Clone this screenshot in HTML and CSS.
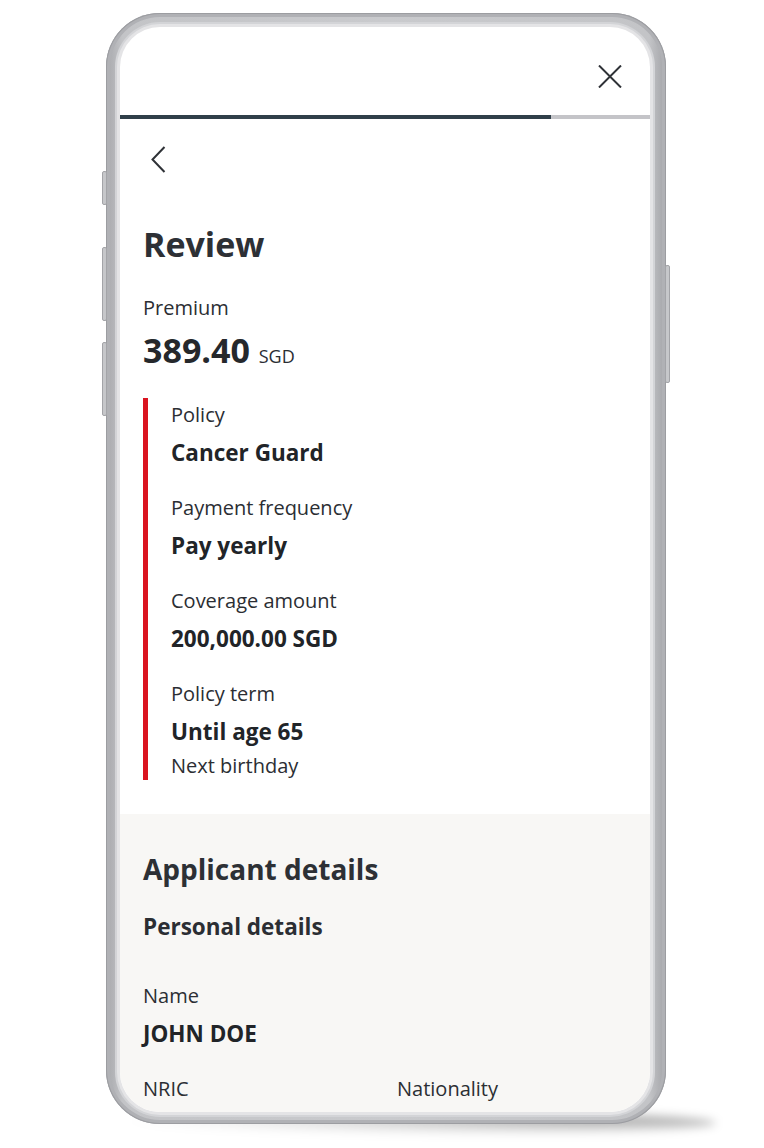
FILE: index.html
```html
<!DOCTYPE html>
<html lang="en">
<head>
<meta charset="utf-8">
<title>Review</title>
<link rel="stylesheet" href="styles.css">
</head>
<body>
<div class="stage">
  <div class="phone">
    <span class="btn btn-l1"></span>
    <span class="btn btn-l2"></span>
    <span class="btn btn-l3"></span>
    <span class="btn btn-r1"></span>
    <div class="screen">
      <div class="topbar">
        <svg class="close" width="24" height="23" viewBox="0 0 24 23" aria-label="Close">
          <path d="M1 0.5 L23 22.5 M23 0.5 L1 22.5" stroke="#2f3237" stroke-width="2" fill="none"/>
        </svg>
      </div>
      <div class="progress"><div class="progress-fill" style="width:81.3%"></div></div>
      <div class="nav">
        <svg width="15" height="27" viewBox="0 0 15 27" aria-label="Back">
          <path d="M13.5 1 L1.5 13.5 L13.5 26" stroke="#2f3237" stroke-width="2" fill="none"/>
        </svg>
      </div>
      <div class="content">
        <h1 class="title">Review</h1>
        <div class="premium-label">Premium</div>
        <div class="price">389.40 <span class="currency">SGD</span></div>
        <div class="summary">
          <div class="item">
            <div class="label">Policy</div>
            <div class="value">Cancer Guard</div>
          </div>
          <div class="item">
            <div class="label">Payment frequency</div>
            <div class="value">Pay yearly</div>
          </div>
          <div class="item">
            <div class="label">Coverage amount</div>
            <div class="value">200,000.00 SGD</div>
          </div>
          <div class="item">
            <div class="label">Policy term</div>
            <div class="value">Until age 65</div>
            <div class="note">Next birthday</div>
          </div>
        </div>
      </div>
      <div class="applicant">
        <h2 class="section-title">Applicant details</h2>
        <h3 class="sub-title">Personal details</h3>
        <div class="fields">
          <div class="field field-full">
            <div class="label">Name</div>
            <div class="value value-name">JOHN DOE</div>
          </div>
          <div class="field">
            <div class="label">NRIC</div>
          </div>
          <div class="field">
            <div class="label">Nationality</div>
          </div>
        </div>
      </div>
    </div>
  </div>
</div>
</body>
</html>
```

FILE: styles.css
```css
* { box-sizing: border-box; }

html {
  margin: 0;
  padding: 0;
  background: #ffffff;
}

body {
  margin: 0;
  padding: 0;
  width: 764px;
  height: 1148px;
  overflow: hidden;
  font-family: "Open Sans", "Noto Sans", "Liberation Sans", sans-serif;
  color: #2b2e33;
}

.stage {
  padding: 13px 0 0 106px;
}

.phone {
  position: relative;
  width: 560px;
  height: 1111px;
  padding: 14px 16px 12px 14px;
  border-radius: 54px;
  background: linear-gradient(90deg, #a7a8ac 0%, #c3c4c7 3%, #c9cacd 50%, #c3c4c7 97%, #a2a3a7 100%);
  box-shadow: inset 0 0 0 1px #9c9da1, inset 0 0 0 4px #b0b1b5;
}

.phone::before {
  content: "";
  position: absolute;
  left: 10px;
  right: -50px;
  bottom: -12px;
  height: 26px;
  z-index: -1;
  border-radius: 50%;
  background: radial-gradient(ellipse at 80% 40%, rgba(0,0,0,0.35) 0%, rgba(0,0,0,0.12) 40%, rgba(0,0,0,0) 70%);
  filter: blur(5px);
}

.btn {
  position: absolute;
  width: 5px;
  background: #c6c7ca;
  border: 1px solid #a3a4a8;
  border-radius: 2px;
}
.btn-l1 { left: -4px; top: 158px; height: 34px; }
.btn-l2 { left: -4px; top: 234px; height: 74px; }
.btn-l3 { left: -4px; top: 329px; height: 74px; }
.btn-r1 { right: -4px; top: 252px; height: 118px; }

.screen {
  position: relative;
  width: 530px;
  height: 1085px;
  border-radius: 40px;
  overflow: hidden;
  background: #ffffff;
  display: flex;
  flex-direction: column;
  box-shadow: 0 0 0 3px #e4e4e6, 0 0 0 5px #d3d4d7;
}

.topbar {
  height: 88px;
  flex: none;
  display: flex;
  justify-content: flex-end;
  align-items: flex-start;
  padding: 38px 28px 0 0;
}

.close { display: block; }

.progress {
  flex: none;
  height: 4px;
  background: #c4c4c8;
}
.progress-fill {
  height: 100%;
  background: #303f49;
}

.nav {
  flex: none;
  padding: 27px 0 0 31px;
  height: 54px;
}
.nav svg { display: block; }

.content {
  flex: none;
  padding: 0 23px;
}

.title {
  margin: 49px 0 0;
  font-size: 34px;
  line-height: 44px;
  font-weight: 700;
  color: #2d3035;
}

.premium-label {
  margin-top: 28px;
  font-size: 20px;
  line-height: 28px;
}

.price {
  margin-top: 6px;
  font-size: 34px;
  line-height: 44px;
  font-weight: 700;
  color: #25282c;
}
.currency {
  font-size: 18px;
  line-height: 1;
  font-weight: 400;
  color: #2b2e33;
}

.summary {
  margin-top: 26px;
  border-left: 5px solid #da1420;
  padding: 3px 0 0 23px;
}
.item + .item { margin-top: 26px; }

.label {
  font-size: 20px;
  line-height: 28px;
  color: #2b2e33;
}
.value {
  margin-top: 9px;
  font-size: 22.5px;
  line-height: 30px;
  font-weight: 700;
  color: #212428;
}
.note {
  margin-top: 5px;
  font-size: 20px;
  line-height: 28px;
}

.applicant {
  flex: 1;
  margin-top: 34px;
  background: #f8f7f5;
  padding: 37px 23px 0;
}

.section-title {
  margin: 0;
  font-size: 28px;
  line-height: 36px;
  font-weight: 700;
  color: #2d3035;
}

.sub-title {
  margin: 25px 0 0;
  font-size: 22.5px;
  line-height: 30px;
  font-weight: 700;
  color: #2b2e33;
}

.fields {
  margin-top: 40px;
  display: grid;
  grid-template-columns: 1fr 1fr;
  column-gap: 24px;
  row-gap: 26px;
}
.field-full { grid-column: 1 / -1; }
.value-name { margin-top: 9px; }
```
